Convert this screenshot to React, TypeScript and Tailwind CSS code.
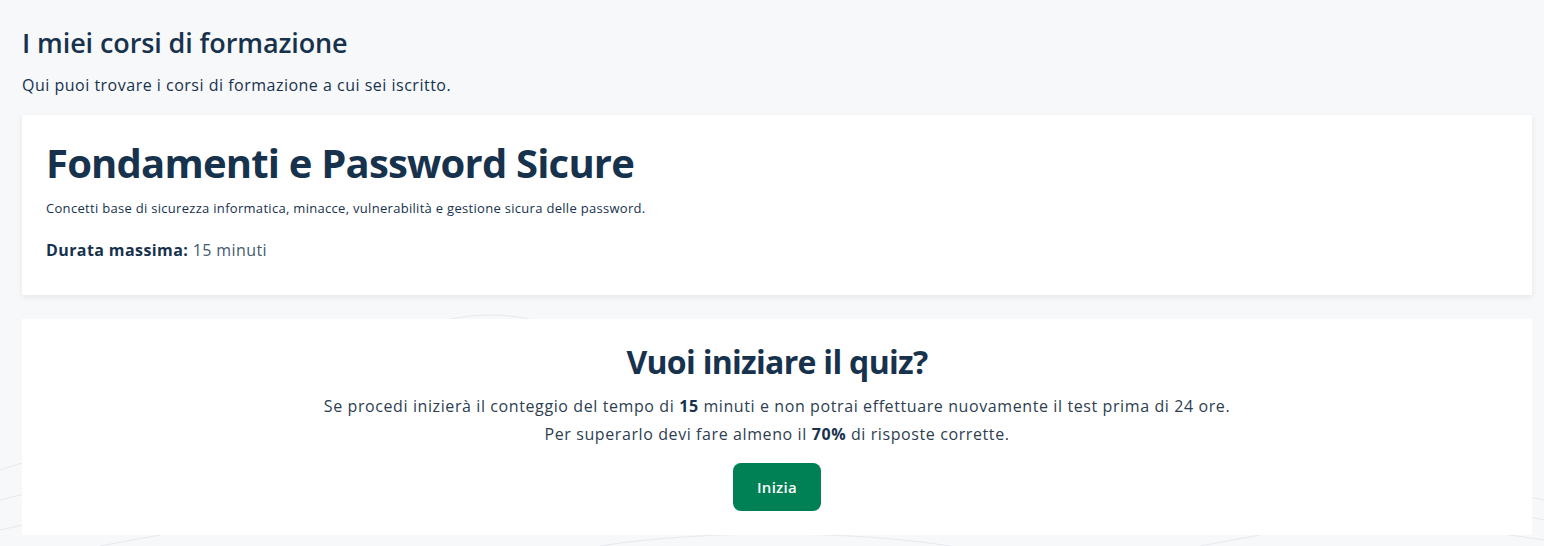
export default function App() {
  return (
    <div className="relative min-h-[546px] w-full overflow-hidden bg-[#f7f8fa] [font-family:'Open_Sans','Noto_Sans',sans-serif] text-[#17324d]">
      {/* faint background pattern */}
      <svg className="pointer-events-none absolute inset-0 h-full w-full" viewBox="0 0 1544 546" preserveAspectRatio="none" fill="none">
        <g stroke="#e6e9ee" strokeWidth="1">
          <path d="M420 330 C 460 310, 520 310, 560 330" />
          <path d="M0 470 C 60 450, 120 440, 200 430" />
          <path d="M0 500 C 80 480, 160 470, 260 460" />
          <path d="M0 530 C 90 510, 180 500, 300 490" />
          <path d="M1544 500 C 1500 490, 1460 480, 1420 470" />
          <path d="M1544 520 C 1490 510, 1440 500, 1400 495" />
          <path d="M1544 540 C 1480 530, 1420 525, 1360 520" />
          <path d="M600 546 C 700 530, 850 530, 950 546" />
          <path d="M100 546 L 160 535" />
          <path d="M1200 546 L 1260 535" />
        </g>
      </svg>

      <div className="relative flex flex-col pl-[22px] pr-[12px] pt-[27px] pb-[11px]">
        <h1 className="text-[27px] font-semibold leading-[32px] tracking-[-0.1px]">I miei corsi di formazione</h1>
        <p className="mt-[14px] text-[16px] leading-[24px] tracking-[0.5px]">Qui puoi trovare i corsi di formazione a cui sei iscritto.</p>

        <div className="mt-[18px] flex flex-col bg-white px-[24px] pt-[24px] pb-[33px] shadow-[0_2px_6px_rgba(0,0,0,0.08)]">
          <h2 className="text-[40px] font-bold leading-[48px] tracking-[-0.8px]">Fondamenti e Password Sicure</h2>
          <p className="mt-[12px] text-[13px] leading-[18px] tracking-[0.3px]">
            Concetti base di sicurezza informatica, minacce, vulnerabilità e gestione sicura delle password.
          </p>
          <p className="mt-[21px] text-[16px] leading-[24px] tracking-[0.4px]">
            <span className="font-bold">Durata massima:</span> <span className="text-[#435a70]">15 minuti</span>
          </p>
        </div>

        <div className="mt-[24px] flex flex-col items-center bg-white pt-[23px] pb-[24px] text-center">
          <h2 className="text-[32px] font-bold leading-[40px] tracking-[-0.7px]">Vuoi iniziare il quiz?</h2>
          <p className="mt-[10px] text-[16px] leading-[28px] tracking-[0.6px] text-[#2d3e50]">
            Se procedi inizierà il conteggio del tempo di <span className="font-bold text-[#17324d]">15</span> minuti e non potrai effettuare nuovamente il test prima di 24 ore.
          </p>
          <p className="text-[16px] leading-[28px] tracking-[0.6px] text-[#2d3e50]">
            Per superarlo devi fare almeno il <span className="font-bold text-[#17324d]">70%</span> di risposte corrette.
          </p>
          <button className="mt-[15px] h-[48px] w-[88px] rounded-[8px] bg-[#008055] text-[15px] font-semibold tracking-[0.3px] text-white">
            Inizia
          </button>
        </div>
      </div>
    </div>
  );
}
